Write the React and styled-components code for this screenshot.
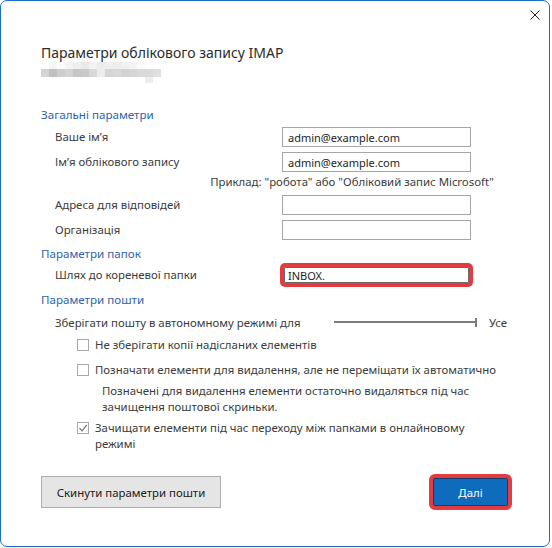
import React from 'react';
import styled, { createGlobalStyle } from 'styled-components';

const GlobalStyle = createGlobalStyle`
  html, body { margin: 0; padding: 0; background: #fff; }
  body { font-family: "Segoe UI", "Noto Sans", sans-serif; }
  * { box-sizing: border-box; }
`;

const Window = styled.div`
  width: 550px;
  height: 547px;
  border: 1px solid #1c6fc6;
  border-radius: 7px;
  background: #fff;
  display: flex;
  flex-direction: column;
  color: #3b3b3b;
  font-size: 11.4px;
  overflow: hidden;
`;

const TitleBar = styled.div`
  height: 27px;
  display: flex;
  justify-content: flex-end;
  align-items: flex-start;
  padding: 9px 9px 0 0;
`;

const CloseButton = styled.button`
  border: 0;
  padding: 0;
  background: none;
  width: 10px;
  height: 10px;
  display: block;
  svg { display: block; }
`;

const Body = styled.div`
  flex: 1;
  display: flex;
  flex-direction: column;
  padding: 0 39px 38px 40px;
`;

const Title = styled.h1`
  margin: 15px 0 0;
  font-size: 14px;
  line-height: 19px;
  font-weight: 400;
  color: #2b2b2b;
`;

const SectionHeader = styled.div`
  color: #2e64ab;
  font-size: 11.6px;
  line-height: 16px;
  margin-top: ${p => p.$top}px;
`;

const FieldGrid = styled.div`
  display: grid;
  grid-template-columns: 227px 189px;
  grid-auto-rows: 20px;
  row-gap: 5px;
  align-items: center;
  padding-left: 14px;
  margin-top: ${p => p.$top}px;
`;

const Label = styled.label`
  line-height: 16px;
`;

const Field = styled.input`
  width: 189px;
  height: 20px;
  border: 1px solid ${p => (p.$highlight ? '#e53a3f' : '#a6a6a6')};
  border-width: ${p => (p.$highlight ? 2 : 1)}px;
  border-radius: ${p => (p.$highlight ? 3 : 0)}px;
  box-shadow: ${p => (p.$highlight ? '0 0 0 2px #e53a3f, inset 0 0 0 1px #6a6a6a' : 'none')};
  padding: 0 ${p => (p.$highlight ? 4 : 5)}px;
  font: inherit;
  font-size: 11px;
  color: #1e1e1e;
  background: #fff;
  outline: none;
`;

const Hint = styled.div`
  text-align: right;
  padding-right: 16px;
  line-height: 16px;
  margin: 2px 0 5px;
`;

const SliderRow = styled.div`
  display: flex;
  align-items: center;
  height: 16px;
  padding-left: 14px;
  margin-top: 6px;
`;

const SliderLabel = styled.span`
  flex: 1;
`;

const Track = styled.div`
  width: 143px;
  display: flex;
  align-items: center;
`;

const TrackLine = styled.div`
  flex: 1;
  height: 2px;
  background: #7c7c7c;
`;

const TrackTick = styled.div`
  width: 2px;
  height: 9px;
  background: #7c7c7c;
`;

const SliderValue = styled.span`
  width: 21px;
  margin-left: 12px;
`;

const CheckRow = styled.div`
  display: flex;
  align-items: flex-start;
  padding-left: 36px;
  line-height: 16px;
  margin-top: ${p => p.$top}px;
`;

const Box = styled.span`
  width: 12px;
  height: 12px;
  margin-top: 2px;
  border: 1px solid #a9a9a9;
  background: #fff;
  flex: none;
  display: flex;
  align-items: center;
  justify-content: center;
`;

const CheckText = styled.span`
  margin-left: 6px;
  white-space: nowrap;
`;

const Note = styled.div`
  padding-left: 61px;
  line-height: 16px;
  margin-top: 5px;
`;

const Footer = styled.div`
  margin-top: auto;
  display: flex;
  justify-content: space-between;
  align-items: center;
`;

const Button = styled.button`
  height: 32px;
  width: ${p => p.$width}px;
  font: inherit;
  font-size: 11.4px;
  padding: 0;
  background: ${p => (p.$primary ? '#0f6cbd' : '#e5e5e5')};
  color: ${p => (p.$primary ? '#fff' : '#202020')};
  border: ${p => (p.$primary ? '2px solid #e53a3f' : '1px solid #adadad')};
  border-radius: ${p => (p.$primary ? 4 : 0)}px;
  box-shadow: ${p => (p.$primary ? '0 0 0 2px #e53a3f, inset 0 0 0 1px #123f70' : 'none')};
`;

const blurRows = [
  ['#fdfdfd', '#f6f6f6', '#fbfbfb', '#f4f4f4', '#efefef', '#e9e9e9', '#f2f2f2', '#ececec', '#efefef', '#ededed', '#f1f1f1', '#f4f4f4', '#fafafa', '#fefefe', '#ffffff'],
  ['#d3d3d3', '#c0c0c0', '#cdcdcd', '#d3d3d3', '#c6c6c6', '#c9c9c9', '#d8d8d8', '#ededed', '#d5d5d5', '#d8d8d8', '#d2d2d2', '#d6d6d6', '#d9d9d9', '#dadada', '#e0e0e0'],
];

// pixelated (blurred) account address under the title
const BlurredAddress = () => (
  <svg width="121" height="21" viewBox="0 0 121 21" style={{ display: 'block' }}>
    {blurRows.map((row, r) =>
      row.map((c, i) => (
        <rect key={`${r}-${i}`} x={i * 8} y={r === 0 ? 0 : 7} width="8" height={r === 0 ? 7 : 8} fill={c} />
      ))
    )}
    <rect x="104" y="15" width="8" height="6" fill="#ededed" />
  </svg>
);

const CheckMark = () => (
  <svg width="10" height="10" viewBox="0 0 10 10">
    <path d="M1.5 5.2 L4 7.8 L8.8 1.8" fill="none" stroke="#6f6f6f" strokeWidth="1.1" />
  </svg>
);

export default function App() {
  return (
    <>
      <GlobalStyle />
      <Window>
        <TitleBar>
          <CloseButton aria-label="Закрити">
            <svg width="10" height="10" viewBox="0 0 10 10">
              <path d="M0.5 0.5 L9.5 9.5 M9.5 0.5 L0.5 9.5" stroke="#1f1f1f" strokeWidth="1" />
            </svg>
          </CloseButton>
        </TitleBar>
        <Body>
          <Title>Параметри облікового запису IMAP</Title>
          <BlurredAddress />

          <SectionHeader $top={24}>Загальні параметри</SectionHeader>
          <FieldGrid $top={4}>
            <Label>Ваше ім’я</Label>
            <Field readOnly value="admin@example.com" />
            <Label>Ім’я облікового запису</Label>
            <Field readOnly value="admin@example.com" />
          </FieldGrid>
          <Hint>Приклад: "робота" або "Обліковий запис Microsoft"</Hint>
          <FieldGrid $top={0}>
            <Label>Адреса для відповідей</Label>
            <Field readOnly value="" />
            <Label>Організація</Label>
            <Field readOnly value="" />
          </FieldGrid>

          <SectionHeader $top={6}>Параметри папок</SectionHeader>
          <FieldGrid $top={3}>
            <Label>Шлях до кореневої папки</Label>
            <Field readOnly value="INBOX." $highlight />
          </FieldGrid>

          <SectionHeader $top={7}>Параметри пошти</SectionHeader>
          <SliderRow>
            <SliderLabel>Зберігати пошту в автономному режимі для</SliderLabel>
            <Track>
              <TrackLine />
              <TrackTick />
            </Track>
            <SliderValue>Усе</SliderValue>
          </SliderRow>
          <CheckRow $top={7}>
            <Box />
            <CheckText>Не зберігати копії надісланих елементів</CheckText>
          </CheckRow>
          <CheckRow $top={9}>
            <Box />
            <CheckText>Позначати елементи для видалення, але не переміщати їх автоматично</CheckText>
          </CheckRow>
          <Note>
            Позначені для видалення елементи остаточно видаляться під час
            <br />
            зачищення поштової скриньки.
          </Note>
          <CheckRow $top={5}>
            <Box>
              <CheckMark />
            </Box>
            <CheckText>
              Зачищати елементи під час переходу між папками в онлайновому
              <br />
              режимі
            </CheckText>
          </CheckRow>

          <Footer>
            <Button $width={180}>Скинути параметри пошти</Button>
            <Button $width={79} $primary>Далі</Button>
          </Footer>
        </Body>
      </Window>
    </>
  );
}
